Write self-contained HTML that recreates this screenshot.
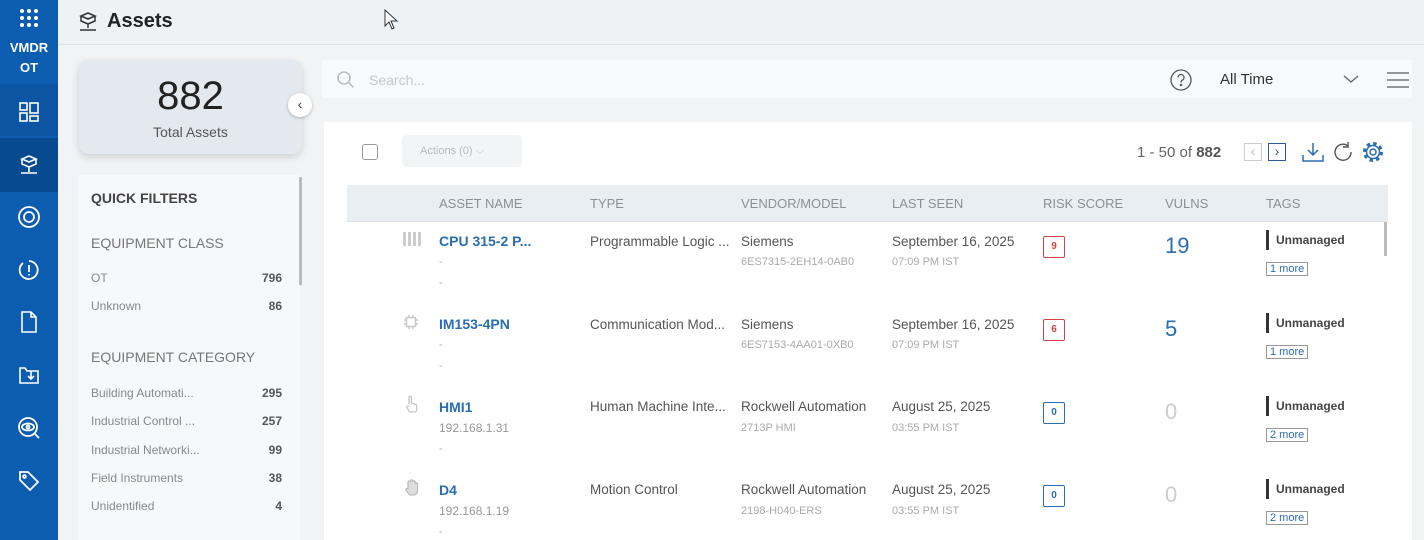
<!DOCTYPE html>
<html><head><meta charset="utf-8"><style>
*{margin:0;padding:0;box-sizing:border-box}
body{width:1424px;height:540px;overflow:hidden;background:#f1f3f5;font-family:"Liberation Sans",sans-serif;position:relative;color:#333}
.a{position:absolute;white-space:nowrap}
.side{left:0;top:0;width:58px;height:540px;background:#0c5cb0}
.ico{left:0;width:58px;height:52px;display:flex;align-items:center;justify-content:center}
.hdr{left:58px;top:0;width:1366px;height:45px;background:#eef2f5;border-bottom:1px solid #dde2e7}
.fl{font-size:12px;color:#888}
.fn{font-size:12px;color:#555;font-weight:bold;text-align:right;width:40px}
.th{font-size:13px;color:#8a9098}
.nm{font-size:14px;font-weight:bold;color:#2a6db0}
.tx{font-size:13.5px;color:#555}
.sm{font-size:11px;color:#aaa}
.rs{width:22px;height:22px;border:1px solid #2a6db0;border-radius:2px;font-size:10px;font-weight:bold;text-align:center;line-height:20px;color:#2a6db0}
.tag{font-size:12px;font-weight:bold;color:#444;border-left:3px solid #333;padding-left:7px;height:20px;line-height:20px}
.more{font-size:11px;color:#2a6db0;border:1px solid #999;padding:0 3px;height:14px;line-height:12px}
</style></head><body>
<div class="a side"></div>
<div class="a" style="left:0;top:84px;width:58px;height:52px;background:#0b55a3"></div>
<div class="a" style="left:0;top:138px;width:58px;height:54px;background:#084a90"></div>
<div class="a ico" style="top:4px;height:28px"><svg width="20" height="20" fill="#fff"><g><circle cx="3" cy="3" r="2"/><circle cx="10" cy="3" r="2"/><circle cx="17" cy="3" r="2"/><circle cx="3" cy="10" r="2"/><circle cx="10" cy="10" r="2"/><circle cx="17" cy="10" r="2"/><circle cx="3" cy="17" r="2"/><circle cx="10" cy="17" r="2"/><circle cx="17" cy="17" r="2"/></g></svg></div>
<div class="a" style="left:0;top:38px;width:58px;text-align:center;color:#fff;font-weight:bold;font-size:13px;line-height:20px">VMDR<br>OT</div>
<div class="a ico" style="top:86px"><svg width="22" height="22" fill="none" stroke="#fff" stroke-width="1.6"><rect x="2" y="2" width="7" height="7"/><rect x="2" y="12" width="7" height="8"/><rect x="12" y="2" width="8" height="10"/><rect x="12" y="15" width="8" height="5"/></svg></div>
<div class="a ico" style="top:139px"><svg width="22" height="22" fill="none" stroke="#fff" stroke-width="1.6"><path d="M11 2l7 3-7 3-7-3z M4 5v5l7 3 7-3V5 M11 13v5 M3 19h16"/></svg></div>
<div class="a ico" style="top:191px"><svg width="24" height="24" fill="none" stroke="#fff" stroke-width="1.8"><circle cx="12" cy="12" r="10"/><circle cx="12" cy="12" r="5"/></svg></div>
<div class="a ico" style="top:244px"><svg width="22" height="22" fill="none" stroke="#fff" stroke-width="1.8"><path d="M5 4a9 9 0 1 0 6-2"/><path d="M11 6v7M11 15v1.5"/></svg></div>
<div class="a ico" style="top:296px"><svg width="18" height="22" fill="none" stroke="#fff" stroke-width="1.6"><path d="M2 1h9l5 5v15H2z M11 1v5h5"/></svg></div>
<div class="a ico" style="top:349px"><svg width="22" height="20" fill="none" stroke="#fff" stroke-width="1.6"><path d="M2 3h5l2 3h11v12H2z M13 6v8 M10 11l3 3 3-3"/></svg></div>
<div class="a ico" style="top:402px"><svg width="24" height="24" fill="none" stroke="#fff" stroke-width="1.8"><circle cx="11" cy="11" r="9"/><ellipse cx="11" cy="11" rx="6" ry="3.5"/><circle cx="11" cy="11" r="1.5"/><path d="M18 18l4 4"/></svg></div>
<div class="a ico" style="top:455px"><svg width="22" height="22" fill="none" stroke="#fff" stroke-width="1.8"><path d="M2 2h8l10 10-8 8L2 10z"/><circle cx="6.5" cy="6.5" r="1.4"/></svg></div>

<div class="a hdr"></div>
<svg class="a" style="left:77px;top:11px" width="22" height="22" fill="none" stroke="#333" stroke-width="1.5"><path d="M11 2l7 3-7 3-7-3z M4 5v5l7 3 7-3V5 M11 13v4 M3 19h16"/></svg>
<div class="a" style="left:107px;top:10px;font-size:20px;font-weight:bold;color:#222">Assets</div>
<svg class="a" style="left:384px;top:9px" width="16" height="22" fill="#fff" stroke="#333" stroke-width="1"><path d="M1 1v16l4-4 3 7 2-1-3-7h6z"/></svg>

<div class="a" style="left:79px;top:60px;width:223px;height:94px;background:#e3e9ef;border-radius:10px;box-shadow:0 3px 8px rgba(0,0,0,.15)"></div>
<div class="a" style="left:79px;top:74px;width:223px;text-align:center;font-size:40px;color:#222">882</div>
<div class="a" style="left:79px;top:124px;width:223px;text-align:center;font-size:14px;color:#555">Total Assets</div>
<div class="a" style="left:288px;top:93px;width:24px;height:24px;border-radius:50%;background:#fff;box-shadow:0 1px 3px rgba(0,0,0,.25);text-align:center;line-height:22px;font-size:14px;color:#444">‹</div>

<div class="a" style="left:78px;top:175px;width:222px;height:365px;background:#f7f8fa"></div>
<div class="a" style="left:299px;top:177px;width:3px;height:108px;background:#bbb"></div>
<div class="a" style="left:91px;top:190px;font-size:14px;font-weight:bold;color:#444">QUICK FILTERS</div>
<div class="a" style="left:91px;top:235px;font-size:14px;color:#777">EQUIPMENT CLASS</div>
<div class="a fl" style="left:91px;top:271px">OT</div><div class="a fn" style="left:242px;top:271px">796</div>
<div class="a fl" style="left:91px;top:299px">Unknown</div><div class="a fn" style="left:242px;top:299px">86</div>
<div class="a" style="left:91px;top:349px;font-size:14px;color:#777">EQUIPMENT CATEGORY</div>
<div class="a fl" style="left:91px;top:386px">Building Automati...</div><div class="a fn" style="left:242px;top:386px">295</div>
<div class="a fl" style="left:91px;top:414px">Industrial Control ...</div><div class="a fn" style="left:242px;top:414px">257</div>
<div class="a fl" style="left:91px;top:443px">Industrial Networki...</div><div class="a fn" style="left:242px;top:443px">99</div>
<div class="a fl" style="left:91px;top:471px">Field Instruments</div><div class="a fn" style="left:242px;top:471px">38</div>
<div class="a fl" style="left:91px;top:499px">Unidentified</div><div class="a fn" style="left:242px;top:499px">4</div>

<div class="a" style="left:322px;top:60px;width:1090px;height:38px;background:#f7f9fb"></div>
<svg class="a" style="left:336px;top:70px" width="20" height="20" fill="none" stroke="#bbb" stroke-width="1.5"><circle cx="8" cy="8" r="6"/><path d="M12.5 12.5l5 5"/></svg>
<div class="a" style="left:369px;top:72px;font-size:14px;color:#c5c8cc">Search...</div>
<svg class="a" style="left:1170px;top:69px" width="22" height="22" fill="none" stroke="#555" stroke-width="1.3"><circle cx="11" cy="11" r="10"/><path d="M8 8.5a3 3 0 1 1 4 2.8c-1 .4-1 1-1 2.2"/><circle cx="11" cy="16" r=".6" fill="#555"/></svg>
<div class="a" style="left:1220px;top:71px;font-size:15px;color:#333">All Time</div>
<svg class="a" style="left:1343px;top:74px" width="16" height="10" fill="none" stroke="#666" stroke-width="1.4"><path d="M1 2l7 6 7-6"/></svg>
<svg class="a" style="left:1386px;top:71px" width="24" height="18" stroke="#777" stroke-width="1.5"><path d="M1 2h22M1 9h22M1 16h22"/></svg>

<div class="a" style="left:324px;top:122px;width:1088px;height:418px;background:#fff"></div>
<div class="a" style="left:362px;top:144px;width:16px;height:16px;border:1.5px solid #999;border-radius:3px"></div>
<div class="a" style="left:402px;top:135px;width:120px;height:32px;background:#f2f4f6;border-radius:5px;font-size:11px;color:#bbb;padding:10px 0 0 18px">Actions (0) ⌵</div>
<div class="a" style="left:1137px;top:144px;font-size:15px;color:#666">1 - 50 of <b style="color:#555">882</b></div>
<div class="a" style="left:1244px;top:143px;width:18px;height:18px;border:1px solid #ccc;font-size:14px;color:#bbb;text-align:center;line-height:15px">‹</div>
<div class="a" style="left:1268px;top:143px;width:18px;height:18px;border:1.5px solid #2a5d8f;font-size:14px;color:#2a5d8f;text-align:center;line-height:14px">›</div>
<svg class="a" style="left:1302px;top:142px" width="22" height="20" fill="none" stroke="#2a6db0" stroke-width="1.5"><path d="M11 1v12M6 8l5 5 5-5M1 13v6h20v-6"/></svg>
<svg class="a" style="left:1333px;top:142px" width="20" height="20" fill="none" stroke="#555" stroke-width="1.4"><path d="M15 4a8 8 0 1 0 3 6M15 0v5h-5"/></svg>
<svg class="a" style="left:1362px;top:141px" width="22" height="22" fill="none" stroke="#2a6db0"><circle cx="11" cy="11" r="8" stroke-width="4" stroke-dasharray="3.2 3.08"/><circle cx="11" cy="11" r="6.5" stroke-width="1.5" fill="#fff"/><circle cx="11" cy="11" r="3" stroke-width="1.5"/></svg>

<div class="a" style="left:347px;top:185px;width:1041px;height:37px;background:#e9eef2;border-bottom:1px solid #dde3e8"></div>
<div class="a th" style="left:439px;top:196px">ASSET NAME</div>
<div class="a th" style="left:590px;top:196px">TYPE</div>
<div class="a th" style="left:741px;top:196px">VENDOR/MODEL</div>
<div class="a th" style="left:892px;top:196px">LAST SEEN</div>
<div class="a th" style="left:1043px;top:196px">RISK SCORE</div>
<div class="a th" style="left:1165px;top:196px">VULNS</div>
<div class="a th" style="left:1266px;top:196px">TAGS</div>
<div class="a" style="left:1384px;top:222px;width:3px;height:34px;background:#bbb"></div>

<!-- row1 -->
<div class="a" style="left:403px;top:232px;width:18px;height:14px;background:repeating-linear-gradient(90deg,#ccc 0 3px,#fff 3px 5px)"></div>
<div class="a nm" style="left:439px;top:233px">CPU 315-2 P...</div>
<div class="a sm" style="left:439px;top:256px">-</div><div class="a sm" style="left:439px;top:277px">-</div>
<div class="a tx" style="left:590px;top:234px">Programmable Logic ...</div>
<div class="a tx" style="left:741px;top:234px">Siemens</div><div class="a sm" style="left:741px;top:256px">6ES7315-2EH14-0AB0</div>
<div class="a tx" style="left:892px;top:234px">September 16, 2025</div><div class="a sm" style="left:892px;top:256px">07:09 PM IST</div>
<div class="a rs" style="left:1043px;top:236px;border-color:#c44;color:#c44">9</div>
<div class="a" style="left:1165px;top:233px;font-size:22px;color:#2a6db0">19</div>
<div class="a tag" style="left:1266px;top:230px">Unmanaged</div>
<div class="a more" style="left:1266px;top:262px">1 more</div>
<!-- row2 -->
<svg class="a" style="left:403px;top:314px" width="16" height="16" fill="none" stroke="#c8c8c8" stroke-width="1.5"><rect x="3.5" y="3.5" width="9" height="9"/><path d="M6 1v2M10 1v2M6 13v2M10 13v2M1 6h2M1 10h2M13 6h2M13 10h2"/></svg>
<div class="a nm" style="left:439px;top:316px">IM153-4PN</div>
<div class="a sm" style="left:439px;top:339px">-</div><div class="a sm" style="left:439px;top:360px">-</div>
<div class="a tx" style="left:590px;top:317px">Communication Mod...</div>
<div class="a tx" style="left:741px;top:317px">Siemens</div><div class="a sm" style="left:741px;top:339px">6ES7153-4AA01-0XB0</div>
<div class="a tx" style="left:892px;top:317px">September 16, 2025</div><div class="a sm" style="left:892px;top:339px">07:09 PM IST</div>
<div class="a rs" style="left:1043px;top:319px;border-color:#c44;color:#c44">6</div>
<div class="a" style="left:1165px;top:316px;font-size:22px;color:#2a6db0">5</div>
<div class="a tag" style="left:1266px;top:313px">Unmanaged</div>
<div class="a more" style="left:1266px;top:345px">1 more</div>
<!-- row3 -->
<svg class="a" style="left:405px;top:395px" width="14" height="18" fill="none" stroke="#c4c4c4" stroke-width="1.3"><path d="M4 9V2.5a1.2 1.2 0 0 1 2.4 0V8 M6.4 8.5h2a1 1 0 0 1 1 1h1.2a1 1 0 0 1 1 1.2V15a2 2 0 0 1-2 2H5.5a2 2 0 0 1-1.7-1L2 12.5a1 1 0 0 1 2-1"/></svg>
<div class="a nm" style="left:439px;top:399px">HMI1</div>
<div class="a" style="left:439px;top:421px;font-size:12px;color:#999">192.168.1.31</div><div class="a sm" style="left:439px;top:443px">-</div>
<div class="a tx" style="left:590px;top:399px">Human Machine Inte...</div>
<div class="a tx" style="left:741px;top:399px">Rockwell Automation</div><div class="a sm" style="left:741px;top:422px">2713P HMI</div>
<div class="a tx" style="left:892px;top:399px">August 25, 2025</div><div class="a sm" style="left:892px;top:422px">03:55 PM IST</div>
<div class="a rs" style="left:1043px;top:402px">0</div>
<div class="a" style="left:1165px;top:399px;font-size:22px;color:#ccc">0</div>
<div class="a tag" style="left:1266px;top:396px">Unmanaged</div>
<div class="a more" style="left:1266px;top:428px">2 more</div>
<!-- row4 -->
<svg class="a" style="left:404px;top:478px" width="16" height="18" fill="#ddd" stroke="#bbb" stroke-width="1.2"><path d="M4 9V4a1.2 1.2 0 0 1 2.4 0V3a1.2 1.2 0 0 1 2.4 0v1a1.2 1.2 0 0 1 2.4 0v2a1.2 1.2 0 0 1 2.4 0v7a4 4 0 0 1-4 4H7a3 3 0 0 1-2.5-1.5L2 12a1 1 0 0 1 2-1z"/></svg>
<div class="a nm" style="left:439px;top:482px">D4</div>
<div class="a" style="left:439px;top:504px;font-size:12px;color:#999">192.168.1.19</div><div class="a sm" style="left:439px;top:526px">-</div>
<div class="a tx" style="left:590px;top:482px">Motion Control</div>
<div class="a tx" style="left:741px;top:482px">Rockwell Automation</div><div class="a sm" style="left:741px;top:505px">2198-H040-ERS</div>
<div class="a tx" style="left:892px;top:482px">August 25, 2025</div><div class="a sm" style="left:892px;top:505px">03:55 PM IST</div>
<div class="a rs" style="left:1043px;top:485px">0</div>
<div class="a" style="left:1165px;top:482px;font-size:22px;color:#ccc">0</div>
<div class="a tag" style="left:1266px;top:479px">Unmanaged</div>
<div class="a more" style="left:1266px;top:511px">2 more</div>
</body></html>
